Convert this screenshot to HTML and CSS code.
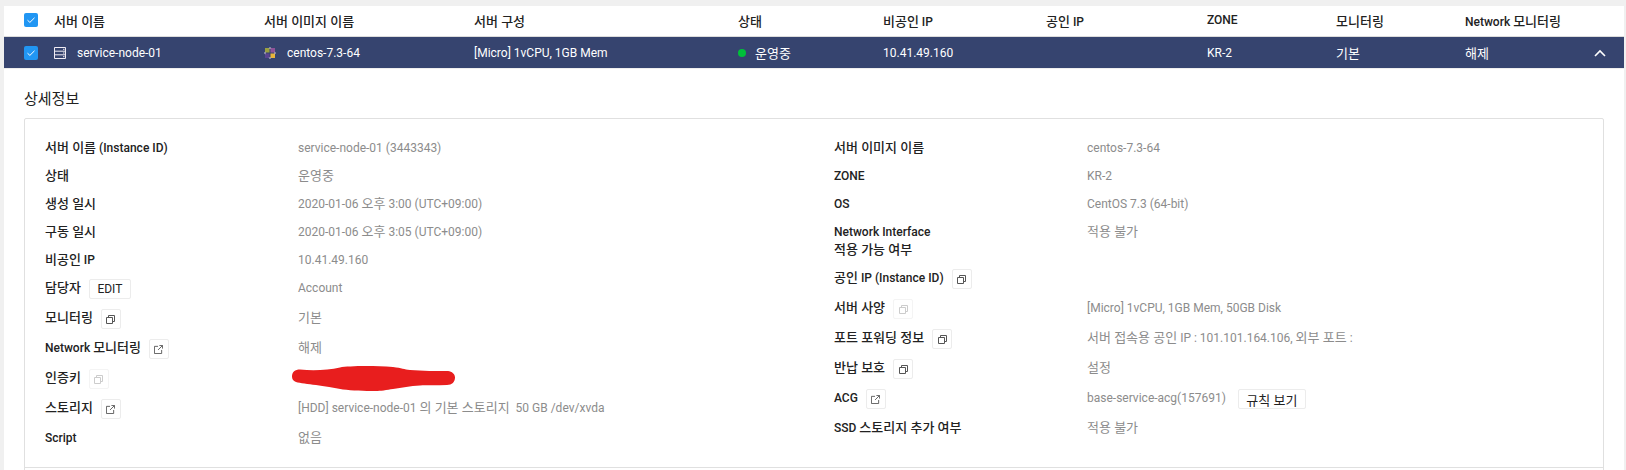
FILE: index.html
```html
<!DOCTYPE html>
<html lang="en">

<head>
    <meta charset="UTF-8">
    <title>서버 상세정보</title>
    <link rel="stylesheet" href="styles.css">
</head>

<body>
    <svg class="defs" width="0" height="0">
        <symbol id="copy" viewBox="0 0 9 9">
            <path d="M0.500 2.500h6v6h-6z M2.500 2.500v-2h6v6h-2" fill="none" stroke="currentColor"></path>
        </symbol>
        <symbol id="link" viewBox="0 0 10 10">
            <path d="M4.500 1.500h-4v8h8v-4 M6 0.500h3.500v3.500 M9.300 0.700l-4.800 4.800" fill="none" stroke="currentColor"></path>
        </symbol>
    </svg>
    <main class="panel">
        <div class="grid head">
            <span class="check"><svg viewBox="0 0 14 14"><path d="M3.500 7.200l2.400 2.200 4.600-4.600" fill="none" stroke="#fff"></path></svg></span>
            <span class="ko">서버 이름</span>
            <span class="ko">서버 이미지 이름</span>
            <span class="ko">서버 구성</span>
            <span class="ko">상태</span>
            <span><span class="ko">비공인</span> IP</span>
            <span><span class="ko">공인</span> IP</span>
            <span>ZONE</span>
            <span class="ko">모니터링</span>
            <span>Network <span class="ko">모니터링</span></span>
        </div>
        <div class="grid selected">
            <span class="check"><svg viewBox="0 0 14 14"><path d="M3.500 7.200l2.400 2.200 4.600-4.600" fill="none" stroke="#fff"></path></svg></span>
            <span class="cell-icon">
                <svg class="server-icon" viewBox="0 0 12 12"><path d="M0.500 0.500h11v11h-11z M0.500 4.200h11 M0.500 7.800h11" fill="none" stroke="#f0ecf4"></path><path d="M9 2.300h1.500 M9 6h1.500 M9 9.700h1.500" stroke="#f0ecf4"></path></svg>
                service-node-01
            </span>
            <span class="cell-icon">
                <svg class="os-icon" viewBox="0 0 12 12">
                    <rect x="1" y="1" width="4.500" height="4.500" fill="#9aa040"></rect>
                    <rect x="6.500" y="1" width="4.500" height="4.500" fill="#8f5299"></rect>
                    <rect x="1" y="6.500" width="4.500" height="4.500" fill="#5a4490"></rect>
                    <rect x="6.500" y="6.500" width="4.500" height="4.500" fill="#e8b43a"></rect>
                    <path d="M6 0l1.500 1.500h-3z M6 12l1.500-1.500h-3z M0 6l1.500-1.500v3z M12 6l-1.500-1.500v3z" fill="#c9c4d6"></path>
                </svg>
                centos-7.3-64
            </span>
            <span>[Micro] 1vCPU, 1GB Mem</span>
            <span class="cell-icon ko"><i class="dot"></i>운영중</span>
            <span>10.41.49.160</span>
            <span></span>
            <span>KR-2</span>
            <span class="ko">기본</span>
            <span class="last"><span class="ko">해제</span>
                <svg class="chevron" viewBox="0 0 12 8"><path d="M1 7l5-5 5 5" fill="none" stroke="#fff" stroke-width="1.600"></path></svg>
            </span>
        </div>

        <section class="detail">
            <h2>상세정보</h2>
            <div class="box">
                <div class="cols">
                    <div class="col">
                        <div class="row"><div class="label"><span class="ko">서버 이름</span> (Instance ID)</div><div class="value">service-node-01 (3443343)</div></div>
                        <div class="row"><div class="label ko">상태</div><div class="value ko">운영중</div></div>
                        <div class="row"><div class="label ko">생성 일시</div><div class="value">2020-01-06 <span class="ko">오후</span> 3:00 (UTC+09:00)</div></div>
                        <div class="row"><div class="label ko">구동 일시</div><div class="value">2020-01-06 <span class="ko">오후</span> 3:05 (UTC+09:00)</div></div>
                        <div class="row"><div class="label"><span class="ko">비공인</span> IP</div><div class="value">10.41.49.160</div></div>
                        <div class="row tall"><div class="label"><span class="ko">담당자</span> <button class="btn edit">EDIT</button></div><div class="value">Account</div></div>
                        <div class="row tall"><div class="label"><span class="ko">모니터링</span> <button class="btn icon"><svg><use href="#copy"></use></svg></button></div><div class="value ko">기본</div></div>
                        <div class="row tall"><div class="label">Network <span class="ko">모니터링</span> <button class="btn icon"><svg><use href="#link"></use></svg></button></div><div class="value ko">해제</div></div>
                        <div class="row tall"><div class="label"><span class="ko">인증키</span> <button class="btn icon off"><svg><use href="#copy"></use></svg></button></div>
                            <div class="value">
                                <svg class="scribble" viewBox="0 0 163 25"><path d="M8 3.500C22 5 36 4 48 1.500 56 0 80-0.500 101 1 110 2 112 3.500 118 4 130 5 145 5 156 5 160 5.500 163 8 163 11.500 163 16 160 19 155 19 145 19.500 135 19 128 19.500 118 20 110 22 101 23 95 24 88 25 84 25 72 25 60 24.500 51 23.500 42 22 32 20 24 19 16 18 8 17 4 16 1 15 0 13 0 10.500 0 6 3 3.500 8 3.500z" fill="#e81e1e"></path></svg>
                            </div>
                        </div>
                        <div class="row tall"><div class="label"><span class="ko">스토리지</span> <button class="btn icon"><svg><use href="#link"></use></svg></button></div><div class="value">[HDD] service-node-01 <span class="ko">의 기본 스토리지</span>&nbsp; 50 GB /dev/xvda</div></div>
                        <div class="row"><div class="label">Script</div><div class="value ko">없음</div></div>
                    </div>
                    <div class="col">
                        <div class="row"><div class="label ko">서버 이미지 이름</div><div class="value">centos-7.3-64</div></div>
                        <div class="row"><div class="label">ZONE</div><div class="value">KR-2</div></div>
                        <div class="row"><div class="label">OS</div><div class="value">CentOS 7.3 (64-bit)</div></div>
                        <div class="row"><div class="label">Network Interface<br><span class="ko">적용 가능 여부</span></div><div class="value ko">적용 불가</div></div>
                        <div class="row tall"><div class="label"><span class="ko">공인</span> IP (Instance ID) <button class="btn icon"><svg><use href="#copy"></use></svg></button></div><div class="value"></div></div>
                        <div class="row tall"><div class="label"><span class="ko">서버 사양</span> <button class="btn icon off"><svg><use href="#copy"></use></svg></button></div><div class="value">[Micro] 1vCPU, 1GB Mem, 50GB Disk</div></div>
                        <div class="row tall"><div class="label"><span class="ko">포트 포워딩 정보</span> <button class="btn icon"><svg><use href="#copy"></use></svg></button></div><div class="value"><span class="ko">서버 접속용 공인</span> IP : 101.101.164.106, <span class="ko">외부 포트</span> :</div></div>
                        <div class="row tall"><div class="label"><span class="ko">반납 보호</span> <button class="btn icon"><svg><use href="#copy"></use></svg></button></div><div class="value ko">설정</div></div>
                        <div class="row tall"><div class="label">ACG <button class="btn icon"><svg><use href="#link"></use></svg></button></div><div class="value">base-service-acg(157691) <button class="btn rule"><span class="ko">규칙 보기</span></button></div></div>
                        <div class="row"><div class="label">SSD <span class="ko">스토리지 추가 여부</span></div><div class="value ko">적용 불가</div></div>
                    </div>
                </div>
            </div>
        </section>
    </main>
</body>

</html>
```

FILE: styles.css
```css
* {
    margin: 0;
    padding: 0;
    box-sizing: border-box;
}

body {
    height: 470px;
    overflow: hidden;
    padding: 6px 2px 0 4px;
    background-color: #f0f0f0;
    font-family: Roboto, "Noto Sans CJK KR", sans-serif;
    font-size: 12px;
    color: #222;
}

.defs {
    position: absolute;
}

.ko {
    font-size: 13px;
}

.panel {
    height: 464px;
    overflow: hidden;
    background-color: white;
}

.grid {
    display: grid;
    grid-template-columns: 50px 210px 210px 264px 145px 163px 161px 129px 129px 1fr;
    align-items: center;
}

.head {
    height: 31px;
    border-bottom: 1px solid #dcdcdc;
    font-weight: 500;
    padding-bottom: 2px;
}

.selected {
    height: 32px;
    background-color: #36446f;
    color: white;
    border-bottom: 1px solid #eeeeee;
}

.check {
    width: 14px;
    height: 14px;
    margin-left: 20px;
    border-radius: 2px;
    background-color: #2196f3;
}

.check svg {
    display: block;
}

.cell-icon {
    display: flex;
    align-items: center;
}

.server-icon {
    width: 12px;
    height: 12px;
    margin-right: 11px;
}

.os-icon {
    width: 12px;
    height: 12px;
    margin-right: 11px;
}

.dot {
    width: 8px;
    height: 8px;
    margin-right: 9px;
    border-radius: 50%;
    background-color: #00c03a;
}

.last {
    display: flex;
    justify-content: space-between;
    align-items: center;
    padding-right: 18px;
}

.chevron {
    width: 12px;
    height: 8px;
}

.detail {
    padding: 20px 20px 0;
}

h2 {
    font-size: 15px;
    font-weight: 400;
    line-height: 20px;
    margin-bottom: 9px;
}

.box {
    height: 360px;
    border: 1px solid #e0e0e0;
    border-radius: 2px;
}

.cols {
    display: flex;
    height: 349px;
    padding: 14px 20px 0;
    border-bottom: 1px solid #e0e0e0;
}

.col {
    width: 789px;
}

.col:last-child {
    flex: 1;
}

.row {
    display: flex;
    padding: 6px 0 4px;
    line-height: 18px;
}

.tall {
    height: 30px;
}

.label {
    width: 253px;
    font-weight: 500;
    flex-shrink: 0;
}

.value {
    color: #8c8c8c;
}

.btn {
    display: inline-block;
    height: 20px;
    margin-left: 5px;
    vertical-align: top;
    border: 1px solid #ececec;
    border-radius: 2px;
    background-color: white;
    font-family: inherit;
    font-size: 12px;
    color: #222;
}

.edit {
    width: 42px;
}

.rule {
    width: 68px;
    margin-left: 9px;
}

.icon {
    width: 20px;
    color: #555;
}

.icon svg {
    display: block;
    width: 9px;
    height: 9px;
    margin: 0 auto;
}

.off {
    border-color: #f4f4f4;
    color: #ccc;
}

.scribble {
    display: block;
    width: 163px;
    height: 25px;
    margin: -3px 0 -4px -6px;
}
```
